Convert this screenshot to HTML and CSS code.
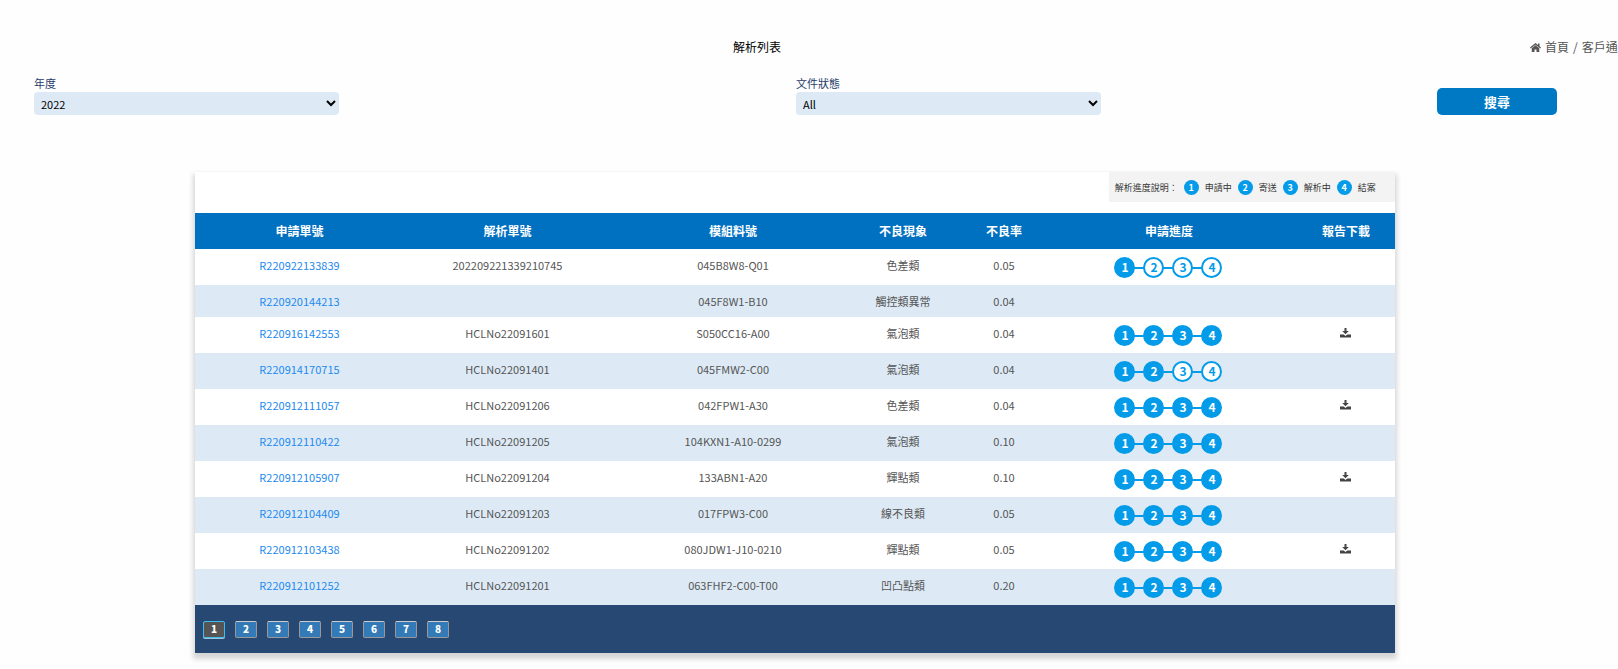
FILE: index.html
```html
<!DOCTYPE html>
<html lang="zh-Hant">
<head>
<meta charset="utf-8">
<title>解析列表</title>
<link rel="stylesheet" href="styles.css">
</head>
<body>
<svg class="defs" aria-hidden="true">
  <symbol id="download" viewBox="0 0 22 20"><path d="M9 0h4v6h4.500L11 12.500 4.500 6H9z"/><path d="M0 13h7.500l3.500 3 3.500-3H22v6H0z"/></symbol>
</svg>
<header class="topbar">
  <h1 class="title">解析列表</h1>
  <nav class="breadcrumb">
    <svg class="home" viewBox="0 0 22 18" aria-hidden="true"><path d="M11 0 0 9l1.500 2L11 3.500l9.500 7.500L22 9l-3-2.500V1h-3v3z"/><path d="M11 4.500 3.500 10.500v7.500h5.500v-5h4v5h5.500v-7.500z"/></svg>
    <a href="#">首頁</a><span>/</span><a href="#">客戶通知</a>
  </nav>
</header>
<main>
  <form class="filters">
    <div class="field">
      <label for="year">年度</label>
      <select id="year"><option>2022</option></select>
    </div>
    <div class="field field-status">
      <label for="status">文件狀態</label>
      <select id="status"><option>All</option></select>
    </div>
    <button class="search" type="button">搜尋</button>
  </form>
  <section class="card">
    <div class="legend">
      <span>解析進度說明：</span>
      <b class="dot">1</b><span>申請中</span>
      <b class="dot">2</b><span>寄送</span>
      <b class="dot">3</b><span>解析中</span>
      <b class="dot">4</b><span>結案</span>
    </div>
    <table class="list">
      <colgroup><col class="c1"><col class="c2"><col class="c3"><col class="c4"><col class="c5"><col class="c6"><col class="c7"></colgroup>
      <thead><tr><th>申請單號</th><th>解析單號</th><th>模組料號</th><th>不良現象</th><th>不良率</th><th>申請進度</th><th>報告下載</th></tr></thead>
      <tbody>
        <tr><td><a href="#">R220922133839</a></td><td>202209221339210745</td><td>045B8W8-Q01</td><td>色差類</td><td>0.05</td><td class="progress"><ol class="steps"><li class="done">1</li><li>2</li><li>3</li><li>4</li></ol></td><td></td></tr>
        <tr><td><a href="#">R220920144213</a></td><td></td><td>045F8W1-B10</td><td>觸控類異常</td><td>0.04</td><td></td><td></td></tr>
        <tr><td><a href="#">R220916142553</a></td><td>HCLNo22091601</td><td>S050CC16-A00</td><td>氣泡類</td><td>0.04</td><td class="progress"><ol class="steps"><li class="done">1</li><li class="done">2</li><li class="done">3</li><li class="done">4</li></ol></td><td><a class="download" href="#" aria-label="下載"><svg><use href="#download"/></svg></a></td></tr>
        <tr><td><a href="#">R220914170715</a></td><td>HCLNo22091401</td><td>045FMW2-C00</td><td>氣泡類</td><td>0.04</td><td class="progress"><ol class="steps"><li class="done">1</li><li class="done">2</li><li>3</li><li>4</li></ol></td><td></td></tr>
        <tr><td><a href="#">R220912111057</a></td><td>HCLNo22091206</td><td>042FPW1-A30</td><td>色差類</td><td>0.04</td><td class="progress"><ol class="steps"><li class="done">1</li><li class="done">2</li><li class="done">3</li><li class="done">4</li></ol></td><td><a class="download" href="#" aria-label="下載"><svg><use href="#download"/></svg></a></td></tr>
        <tr><td><a href="#">R220912110422</a></td><td>HCLNo22091205</td><td>104KXN1-A10-0299</td><td>氣泡類</td><td>0.10</td><td class="progress"><ol class="steps"><li class="done">1</li><li class="done">2</li><li class="done">3</li><li class="done">4</li></ol></td><td></td></tr>
        <tr><td><a href="#">R220912105907</a></td><td>HCLNo22091204</td><td>133ABN1-A20</td><td>輝點類</td><td>0.10</td><td class="progress"><ol class="steps"><li class="done">1</li><li class="done">2</li><li class="done">3</li><li class="done">4</li></ol></td><td><a class="download" href="#" aria-label="下載"><svg><use href="#download"/></svg></a></td></tr>
        <tr><td><a href="#">R220912104409</a></td><td>HCLNo22091203</td><td>017FPW3-C00</td><td>線不良類</td><td>0.05</td><td class="progress"><ol class="steps"><li class="done">1</li><li class="done">2</li><li class="done">3</li><li class="done">4</li></ol></td><td></td></tr>
        <tr><td><a href="#">R220912103438</a></td><td>HCLNo22091202</td><td>080JDW1-J10-0210</td><td>輝點類</td><td>0.05</td><td class="progress"><ol class="steps"><li class="done">1</li><li class="done">2</li><li class="done">3</li><li class="done">4</li></ol></td><td><a class="download" href="#" aria-label="下載"><svg><use href="#download"/></svg></a></td></tr>
        <tr><td><a href="#">R220912101252</a></td><td>HCLNo22091201</td><td>063FHF2-C00-T00</td><td>凹凸點類</td><td>0.20</td><td class="progress"><ol class="steps"><li class="done">1</li><li class="done">2</li><li class="done">3</li><li class="done">4</li></ol></td><td></td></tr>
      </tbody>
    </table>
    <nav class="pager" aria-label="分頁">
      <span class="current">1</span><a href="#">2</a><a href="#">3</a><a href="#">4</a><a href="#">5</a><a href="#">6</a><a href="#">7</a><a href="#">8</a>
    </nav>
  </section>
</main>
</body>
</html>
```
FILE: styles.css
```css
* { box-sizing: border-box; }
body {
  margin: 0;
  background: #fefefe;
  color: #555;
  font-family: "Noto Sans CJK TC", sans-serif;
  font-size: 11px;
  line-height: 16px;
  overflow-x: hidden;
}
a { text-decoration: none; }
.defs { display: none; }

.topbar {
  display: grid;
  grid-template-columns: minmax(0, 1514fr) minmax(0, 104fr);
  padding-top: 39px;
  font-size: 12px;
}
.title {
  margin: 0;
  color: #000;
  font-size: 12px;
  font-weight: 400;
  text-align: center;
}
.breadcrumb {
  display: flex;
  align-items: center;
  gap: 4px;
  padding-left: 16px;
  white-space: nowrap;
  overflow: hidden;
}
.breadcrumb a { color: #555; }
.home { flex: none; width: 11px; height: 9px; fill: #555; }

.filters {
  display: grid;
  grid-template-columns: 305fr 457fr 305fr 336fr 120px;
  padding: 20px 61px 0 34px;
}
.field { display: flex; flex-direction: column; gap: 1px; color: #1f3c6b; }
.field-status { grid-column: 3; }
.field select {
  height: 23px;
  padding: 0 3px;
  border: 0;
  border-radius: 4px;
  background: #ddeaf5;
  color: #000;
  font: inherit;
}
.search {
  grid-column: 5;
  align-self: end;
  height: 27px;
  padding: 0 0 1px;
  border: 0;
  border-radius: 5px;
  background: #0079c4;
  color: #fff;
  font: 700 13px "Noto Sans CJK TC", sans-serif;
}

.card {
  margin: 57px 13.8% 14px 12.05%;
  background: #fff;
  box-shadow: 0 4px 5px 2px rgba(0, 0, 0, 0.16);
}
.legend {
  display: flex;
  align-items: center;
  gap: 6px;
  width: fit-content;
  height: 30px;
  margin: 0 0 11px auto;
  padding: 1px 19px 0 6px;
  background: #f3f3f3;
  color: #333;
  font-size: 9px;
}
.dot {
  width: 15px;
  border-radius: 50%;
  background: #049be8;
  color: #fff;
  line-height: 15px;
  text-align: center;
}

.list { width: 100%; border-collapse: collapse; table-layout: fixed; }
.c1 { width: 193px; }
.c2 { width: 239px; }
.c3 { width: 212px; }
.c4 { width: 128px; }
.c5 { width: 74px; }
.c6 { width: 256px; }
.c7 { width: 98px; }
.list th {
  height: 36px;
  padding: 0 0 1px;
  background: #0070c0;
  color: #fff;
  font-size: 12px;
  font-weight: 700;
}
.list td { padding: 8px 0; text-align: center; vertical-align: top; }
.list th:first-child, .list td:first-child { padding-left: 16px; }
.list tbody tr:nth-child(even) { background: #ddeaf5; }
.list a { color: #2189f0; }
.list .progress { padding: 8px 1px 7px 0; }
.steps {
  display: flex;
  justify-content: center;
  margin: 0;
  padding: 0;
  list-style: none;
}
.steps li {
  width: 21px;
  height: 21px;
  border: 2px solid #049be8;
  border-radius: 50%;
  background: #fff;
  color: #049be8;
  font-size: 12px;
  font-weight: 700;
  line-height: 16px;
}
.steps li.done { background: #049be8; color: #fff; }
.steps li + li { position: relative; margin-left: 8px; }
.steps li + li::before {
  content: "";
  position: absolute;
  top: 8px;
  right: 18px;
  width: 10px;
  height: 2px;
  background: #049be8;
}
.download svg { width: 11px; height: 10px; fill: #444; }

.pager {
  display: flex;
  align-items: center;
  gap: 10px;
  height: 48px;
  padding: 0 8px;
  background: #284874;
}
.pager > * {
  width: 22px;
  height: 17px;
  border: 1px solid #999;
  border-top-color: #ccc;
  border-radius: 2px;
  background: #337ab7;
  color: #fff;
  font-size: 10px;
  font-weight: 900;
  line-height: 14px;
  text-align: center;
}
.pager .current {
  border-color: #3fbbec;
  background: #555;
  box-shadow: 0 1px 0 #9bc4dc;
}
```
